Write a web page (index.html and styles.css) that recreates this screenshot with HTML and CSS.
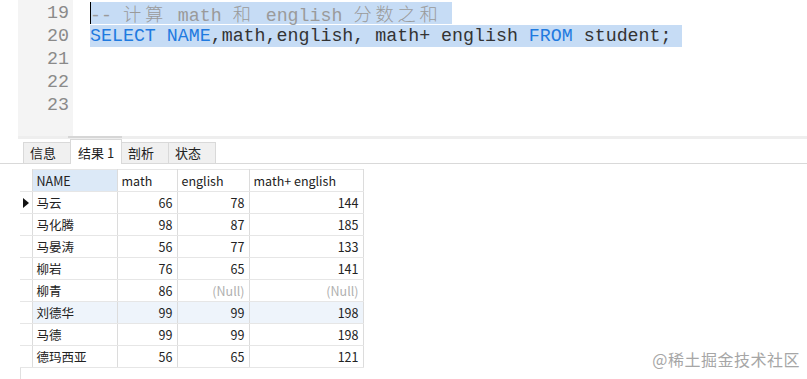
FILE: index.html
```html
<!DOCTYPE html>
<html lang="zh-CN">
<head>
    <meta charset="UTF-8">
    <title>查询结果</title>
    <link rel="stylesheet" href="styles.css">
</head>
<body>
    <!-- SQL editor -->
    <div class="editor">
        <div class="gutter">
            <div class="ln">19</div>
            <div class="ln">20</div>
            <div class="ln">21</div>
            <div class="ln">22</div>
            <div class="ln">23</div>
        </div>
        <div class="code">
            <div class="line"><span class="sel caret"><span class="comment">-- <span class="cjk">计算</span> math <span class="cjk">和</span> english <span class="cjk">分数之和</span> </span></span></div>
            <div class="line"><span class="sel"><span class="kw">SELECT</span> <span class="kw">NAME</span>,math,english, math+ english <span class="kw">FROM</span> student; </span></div>
            <div class="line"></div>
            <div class="line"></div>
            <div class="line"></div>
        </div>
    </div>
    <div class="hscroll"><div class="thumb"></div></div>

    <!-- result tabs -->
    <div class="tabs">
        <div class="tab">信息</div>
        <div class="tab active">结果 1</div>
        <div class="tab">剖析</div>
        <div class="tab">状态</div>
    </div>

    <!-- result grid -->
    <div class="grid-wrap">
        <table class="grid">
            <colgroup>
                <col class="c-mark">
                <col class="c-name">
                <col class="c-math">
                <col class="c-eng">
                <col class="c-sum">
            </colgroup>
            <thead>
                <tr>
                    <th class="mark"></th>
                    <th class="focus">NAME</th>
                    <th>math</th>
                    <th>english</th>
                    <th>math+ english</th>
                </tr>
            </thead>
            <tbody>
                <tr><td class="mark"><span class="arrow"></span></td><td>马云</td><td class="num">66</td><td class="num">78</td><td class="num">144</td></tr>
                <tr><td class="mark"></td><td>马化腾</td><td class="num">98</td><td class="num">87</td><td class="num">185</td></tr>
                <tr><td class="mark"></td><td>马晏涛</td><td class="num">56</td><td class="num">77</td><td class="num">133</td></tr>
                <tr><td class="mark"></td><td>柳岩</td><td class="num">76</td><td class="num">65</td><td class="num">141</td></tr>
                <tr><td class="mark"></td><td>柳青</td><td class="num">86</td><td class="num null">(Null)</td><td class="num null">(Null)</td></tr>
                <tr class="hover"><td class="mark"></td><td>刘德华</td><td class="num">99</td><td class="num">99</td><td class="num">198</td></tr>
                <tr><td class="mark"></td><td>马德</td><td class="num">99</td><td class="num">99</td><td class="num">198</td></tr>
                <tr><td class="mark"></td><td>德玛西亚</td><td class="num">56</td><td class="num">65</td><td class="num">121</td></tr>
            </tbody>
        </table>
        <div class="grid-rest"></div>
    </div>

    <div class="watermark">@稀土掘金技术社区</div>
</body>
</html>
```

FILE: styles.css
```css
body {
    margin: 0;
    background: #fff;
    font-family: "Noto Sans CJK SC", "Noto Sans", sans-serif;
    color: #222;
    position: relative;
    height: 379px;
    overflow: hidden;
}

/* editor */
.editor {
    display: flex;
    height: 136px;
    padding-left: 18px;
}
.gutter {
    width: 51px;
    padding: 2px 4px 0 0;
    background: #f4f4f4;
    text-align: right;
    font-family: "Liberation Mono", monospace;
    font-size: 18.3px;
    color: #8a8a8a;
}
.ln {
    height: 23px;
    line-height: 23px;
}
.code {
    flex: 1;
    padding: 2px 0 0 17px;
    font-family: "Liberation Mono", monospace;
    font-size: 18.3px;
    color: #333;
}
.line {
    height: 23px;
    line-height: 23px;
    white-space: pre;
}
.sel {
    display: inline-block;
    background: #c6dcf5;
    height: 22px;
    vertical-align: top;
}
.caret {
    box-shadow: inset 1px 0 0 #000;
}
.comment {
    color: #9a9a9a;
}
.cjk {
    font-family: "Noto Sans CJK SC", sans-serif;
    font-weight: 300;
    letter-spacing: 3.7px;
}
.kw {
    color: #1f7ae0;
}
.hscroll {
    height: 3px;
    margin-left: 18px;
    background: #eeeeee;
}
.thumb {
    margin-left: 50px;
    width: 54px;
    height: 2px;
    background: #d6d6d6;
}

/* tabs */
.tabs {
    display: flex;
    align-items: flex-end;
    height: 24px;
    padding-left: 23px;
    border-bottom: 1px solid #d9d9d9;
}
.tab {
    width: 40px;
    height: 20px;
    line-height: 20px;
    padding-left: 6px;
    margin-right: -1px;
    background: #f0f0f0;
    border: 1px solid #d9d9d9;
    border-bottom: none;
    font-size: 13px;
    color: #222;
}
.tab.active {
    height: 24px;
    line-height: 26px;
    margin-bottom: -1px;
    padding-left: 7px;
    width: 43px;
    background: #fff;
}

/* grid */
.grid-wrap {
    padding: 5px 0 0 20px;
}
.grid {
    border-collapse: collapse;
    table-layout: fixed;
    width: 343px;
    font-size: 12.5px;
}
.c-mark { width: 12px; }
.c-name { width: 85px; }
.c-math { width: 60px; }
.c-eng { width: 72px; }
.c-sum { width: 114px; }
.grid th,
.grid td {
    height: 21px;
    padding: 0 4px;
    border: 1px solid #e6e6e6;
    border-left-color: #dcdcdc;
    border-right-color: #dcdcdc;
    text-align: left;
    font-weight: normal;
    white-space: nowrap;
    overflow: hidden;
}
.grid th.focus {
    background: #dce9f7;
}
.grid .mark {
    padding: 0;
    border-left: none;
    border-top-color: #ececec;
}
.grid thead .mark {
    border-top: none;
}
.grid .num {
    text-align: right;
}
.grid .null {
    color: #b0b0b0;
}
.grid tr.hover td {
    background: #eef4fb;
}
.grid tr.hover td.mark {
    background: #fff;
}
.arrow {
    display: block;
    margin-left: 3px;
    width: 0;
    height: 0;
    border-top: 5px solid transparent;
    border-bottom: 5px solid transparent;
    border-left: 6px solid #111;
}
.grid-rest {
    height: 20px;
    border-left: 1px solid #e0e0e0;
}

.watermark {
    position: absolute;
    right: 7px;
    bottom: 8px;
    font-size: 16px;
    color: #a6a6a6;
    letter-spacing: 0.5px;
}
```
